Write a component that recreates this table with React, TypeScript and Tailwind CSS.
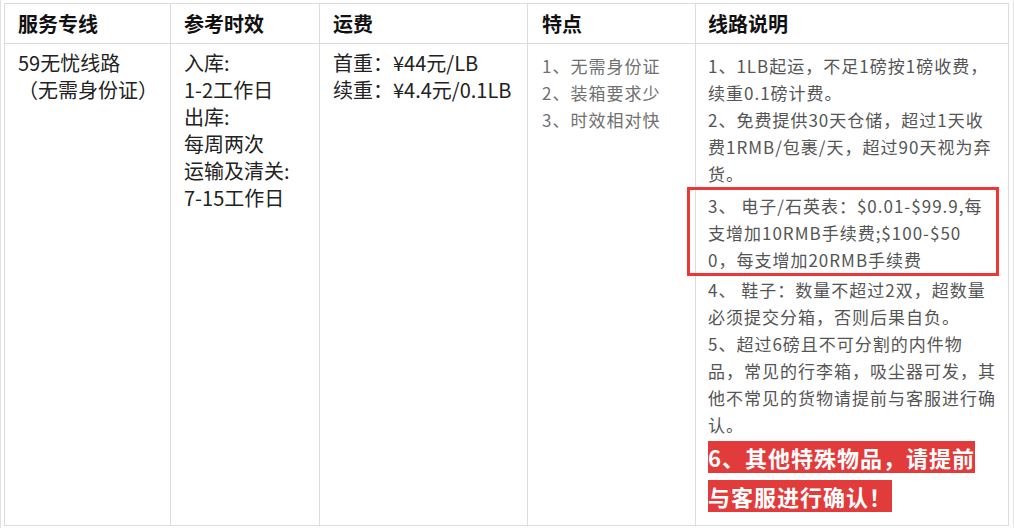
const headCell = "h-[40px] border-r border-b border-[#dcdcdc] flex items-center text-[20px] font-bold text-[#111]";
const leftCell = "border-r border-b border-[#dcdcdc] pl-[13px] pt-[5px] text-[20px] leading-[27px] text-[#222]";

export default function App() {
    return (
        <div className="min-h-[528px] bg-[#efefef] font-['Noto_Sans_CJK_SC','Noto_Sans',sans-serif]">
            <div className="bg-white border-l border-r border-b border-[#e2e2e2] pt-[3px] pl-[3px] pr-[4px] pb-[4px]">
                <div className="grid grid-cols-[166px_149px_208px_168px_313px] border-l border-t border-[#dcdcdc]">
                    <div className={`${headCell} pl-[13px]`}>服务专线</div>
                    <div className={`${headCell} pl-[13px]`}>参考时效</div>
                    <div className={`${headCell} pl-[13px]`}>运费</div>
                    <div className={`${headCell} pl-[14px]`}>特点</div>
                    <div className={`${headCell} pl-[12px]`}>线路说明</div>

                    <div className={leftCell}>
                        59无忧线路
                        <br />
                        （无需身份证）
                    </div>
                    <div className={leftCell}>
                        <div>入库:</div>
                        <div>1-2工作日</div>
                        <div>出库:</div>
                        <div>每周两次</div>
                        <div>运输及清关:</div>
                        <div>7-15工作日</div>
                    </div>
                    <div className={leftCell}>
                        <div>首重：¥44元/LB</div>
                        <div>续重：¥4.4元/0.1LB</div>
                    </div>
                    <div className="border-r border-b border-[#dcdcdc] pl-[14px] pt-[8px] text-[17px] tracking-[1px] leading-[27px] text-[#707070]">
                        <div>1、无需身份证</div>
                        <div>2、装箱要求少</div>
                        <div>3、时效相对快</div>
                    </div>
                    <div className="border-r border-b border-[#dcdcdc] pl-[12px] pr-[11px] pt-[8px] pb-[8px] text-[17px] tracking-[1px] leading-[27px] text-[#555] break-all">
                        <div>1、1LB起运，不足1磅按1磅收费，续重0.1磅计费。</div>
                        <div>2、免费提供30天仓储，超过1天收费1RMB/包裹/天，超过90天视为弃货。</div>
                        <div className="border-[3px] border-[#ee3636] -ml-[21px] -mr-[2px] pl-[18px] pr-[8px] pt-[2px]">
                            3、 电子/石英表：$0.01-$99.9,每支增加10RMB手续费;$100-$500，每支增加20RMB手续费
                        </div>
                        <div>4、 鞋子：数量不超过2双，超数量必须提交分箱，否则后果自负。</div>
                        <div>5、超过6磅且不可分割的内件物品，常见的行李箱，吸尘器可发，其他不常见的货物请提前与客服进行确认。</div>
                        <div className="mt-px leading-[36px]">
                            <span className="bg-[#e23b3b] text-white font-bold text-[22px] tracking-[1px]">
                                6、其他特殊物品，请提前与客服进行确认！
                            </span>
                        </div>
                    </div>
                </div>
            </div>
        </div>
    );
}
